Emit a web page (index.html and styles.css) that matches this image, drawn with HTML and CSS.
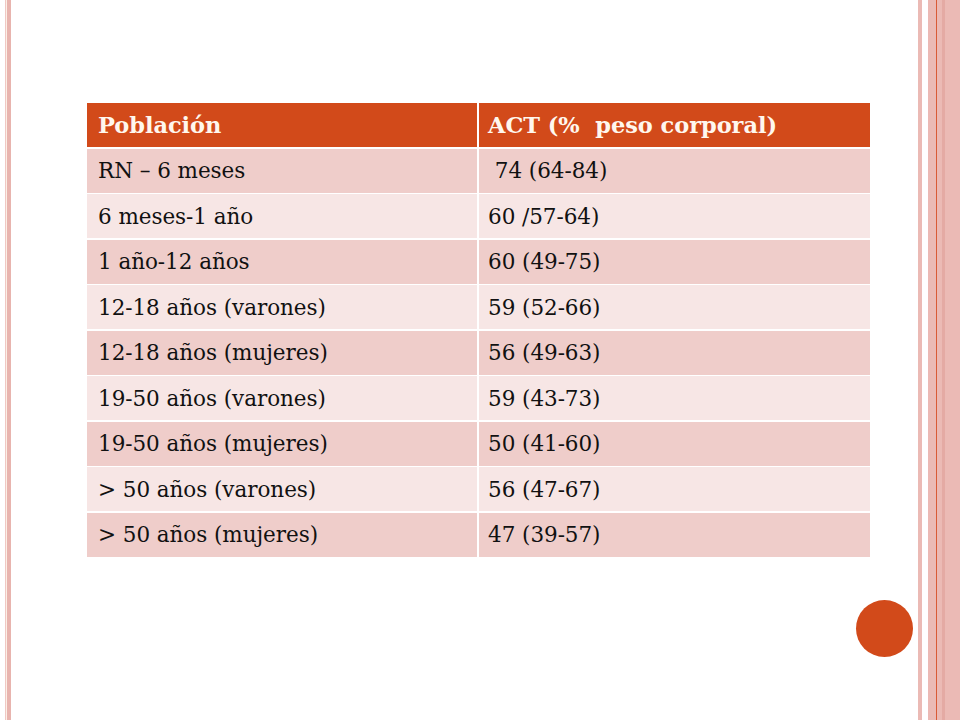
FILE: index.html
```html
<!DOCTYPE html>
<html lang="es">
<head>
<meta charset="utf-8">
<title>ACT</title>
<link rel="stylesheet" href="styles.css">
</head>
<body>
<div class="slide">
  <div class="left-deco">
    <div class="s s-lp"></div>
    <div class="s s-cr"></div>
    <div class="s s-pk"></div>
  </div>
  <main class="content">
    <div class="tbl">
      <div class="cell head">Población</div>
      <div class="cell head">ACT (%&nbsp; peso corporal)</div>
      <div class="cell odd">RN – 6 meses</div>
      <div class="cell odd">&nbsp;74 (64-84)</div>
      <div class="cell even">6 meses-1 año</div>
      <div class="cell even">60 /57-64)</div>
      <div class="cell odd">1 año-12 años</div>
      <div class="cell odd">60 (49-75)</div>
      <div class="cell even">12-18 años (varones)</div>
      <div class="cell even">59 (52-66)</div>
      <div class="cell odd">12-18 años (mujeres)</div>
      <div class="cell odd">56 (49-63)</div>
      <div class="cell even">19-50 años (varones)</div>
      <div class="cell even">59 (43-73)</div>
      <div class="cell odd">19-50 años (mujeres)</div>
      <div class="cell odd">50 (41-60)</div>
      <div class="cell even">&gt; 50 años (varones)</div>
      <div class="cell even">56 (47-67)</div>
      <div class="cell odd">&gt; 50 años (mujeres)</div>
      <div class="cell odd">47 (39-57)</div>
    </div>
  </main>
  <div class="right-deco">
    <div class="s r-a"></div>
    <div class="s r-gap"></div>
    <div class="s r-b"></div>
    <div class="s r-line"></div>
    <div class="s r-c"></div>
    <div class="s r-d"></div>
    <div class="s r-e"></div>
  </div>
  <div class="dot"></div>
</div>
</body>
</html>
```
FILE: styles.css
```css
html, body {
  margin: 0;
  padding: 0;
  background: #ffffff;
}
.slide {
  position: relative;
  width: 960px;
  height: 720px;
  display: flex;
  overflow: hidden;
  font-family: "DejaVu Serif", "Liberation Serif", serif;
}
.left-deco {
  display: flex;
  padding-left: 5px;
  width: 6px;
}
.s { height: 100%; }
.s-lp { width: 1px; background: #f0c8c3; }
.s-cr { width: 1px; background: #fbefe6; }
.s-pk { width: 4px; background: #e8b4ae; }

.content {
  flex: 1;
  padding-top: 103px;
  padding-left: 76px;
}
.tbl {
  width: 783px;
  display: grid;
  grid-template-columns: 390px 391px;
  grid-auto-rows: 44px;
  column-gap: 2px;
  row-gap: 1.5px;
}
.cell {
  display: flex;
  align-items: center;
  padding-left: 11px;
  font-size: 21.5px;
  letter-spacing: -0.05px;
  color: #111111;
  white-space: pre;
}
.cell:nth-child(2n) { padding-left: 9px; }
.head {
  background: #d24a1a;
  color: #fff7ee;
  font-weight: bold;
  font-size: 22.5px;
}
.odd { background: #efcdca; }
.even { background: #f7e6e5; }

.right-deco {
  display: flex;
  width: 42px;
}
.r-a { width: 4px; background: #ebbab5; }
.r-gap { width: 6px; background: #ffffff; }
.r-b { width: 8px; background: #ebbab5; }
.r-line { width: 1px; background: #d95a36; }
.r-c { width: 5px; background: #ebbab5; }
.r-d { width: 3px; background: #e4aaa4; }
.r-e { width: 15px; background: #ebbab5; }

.dot {
  position: absolute;
  left: 856px;
  top: 600px;
  width: 57px;
  height: 57px;
  border-radius: 50%;
  background: #d24a1a;
}
```
